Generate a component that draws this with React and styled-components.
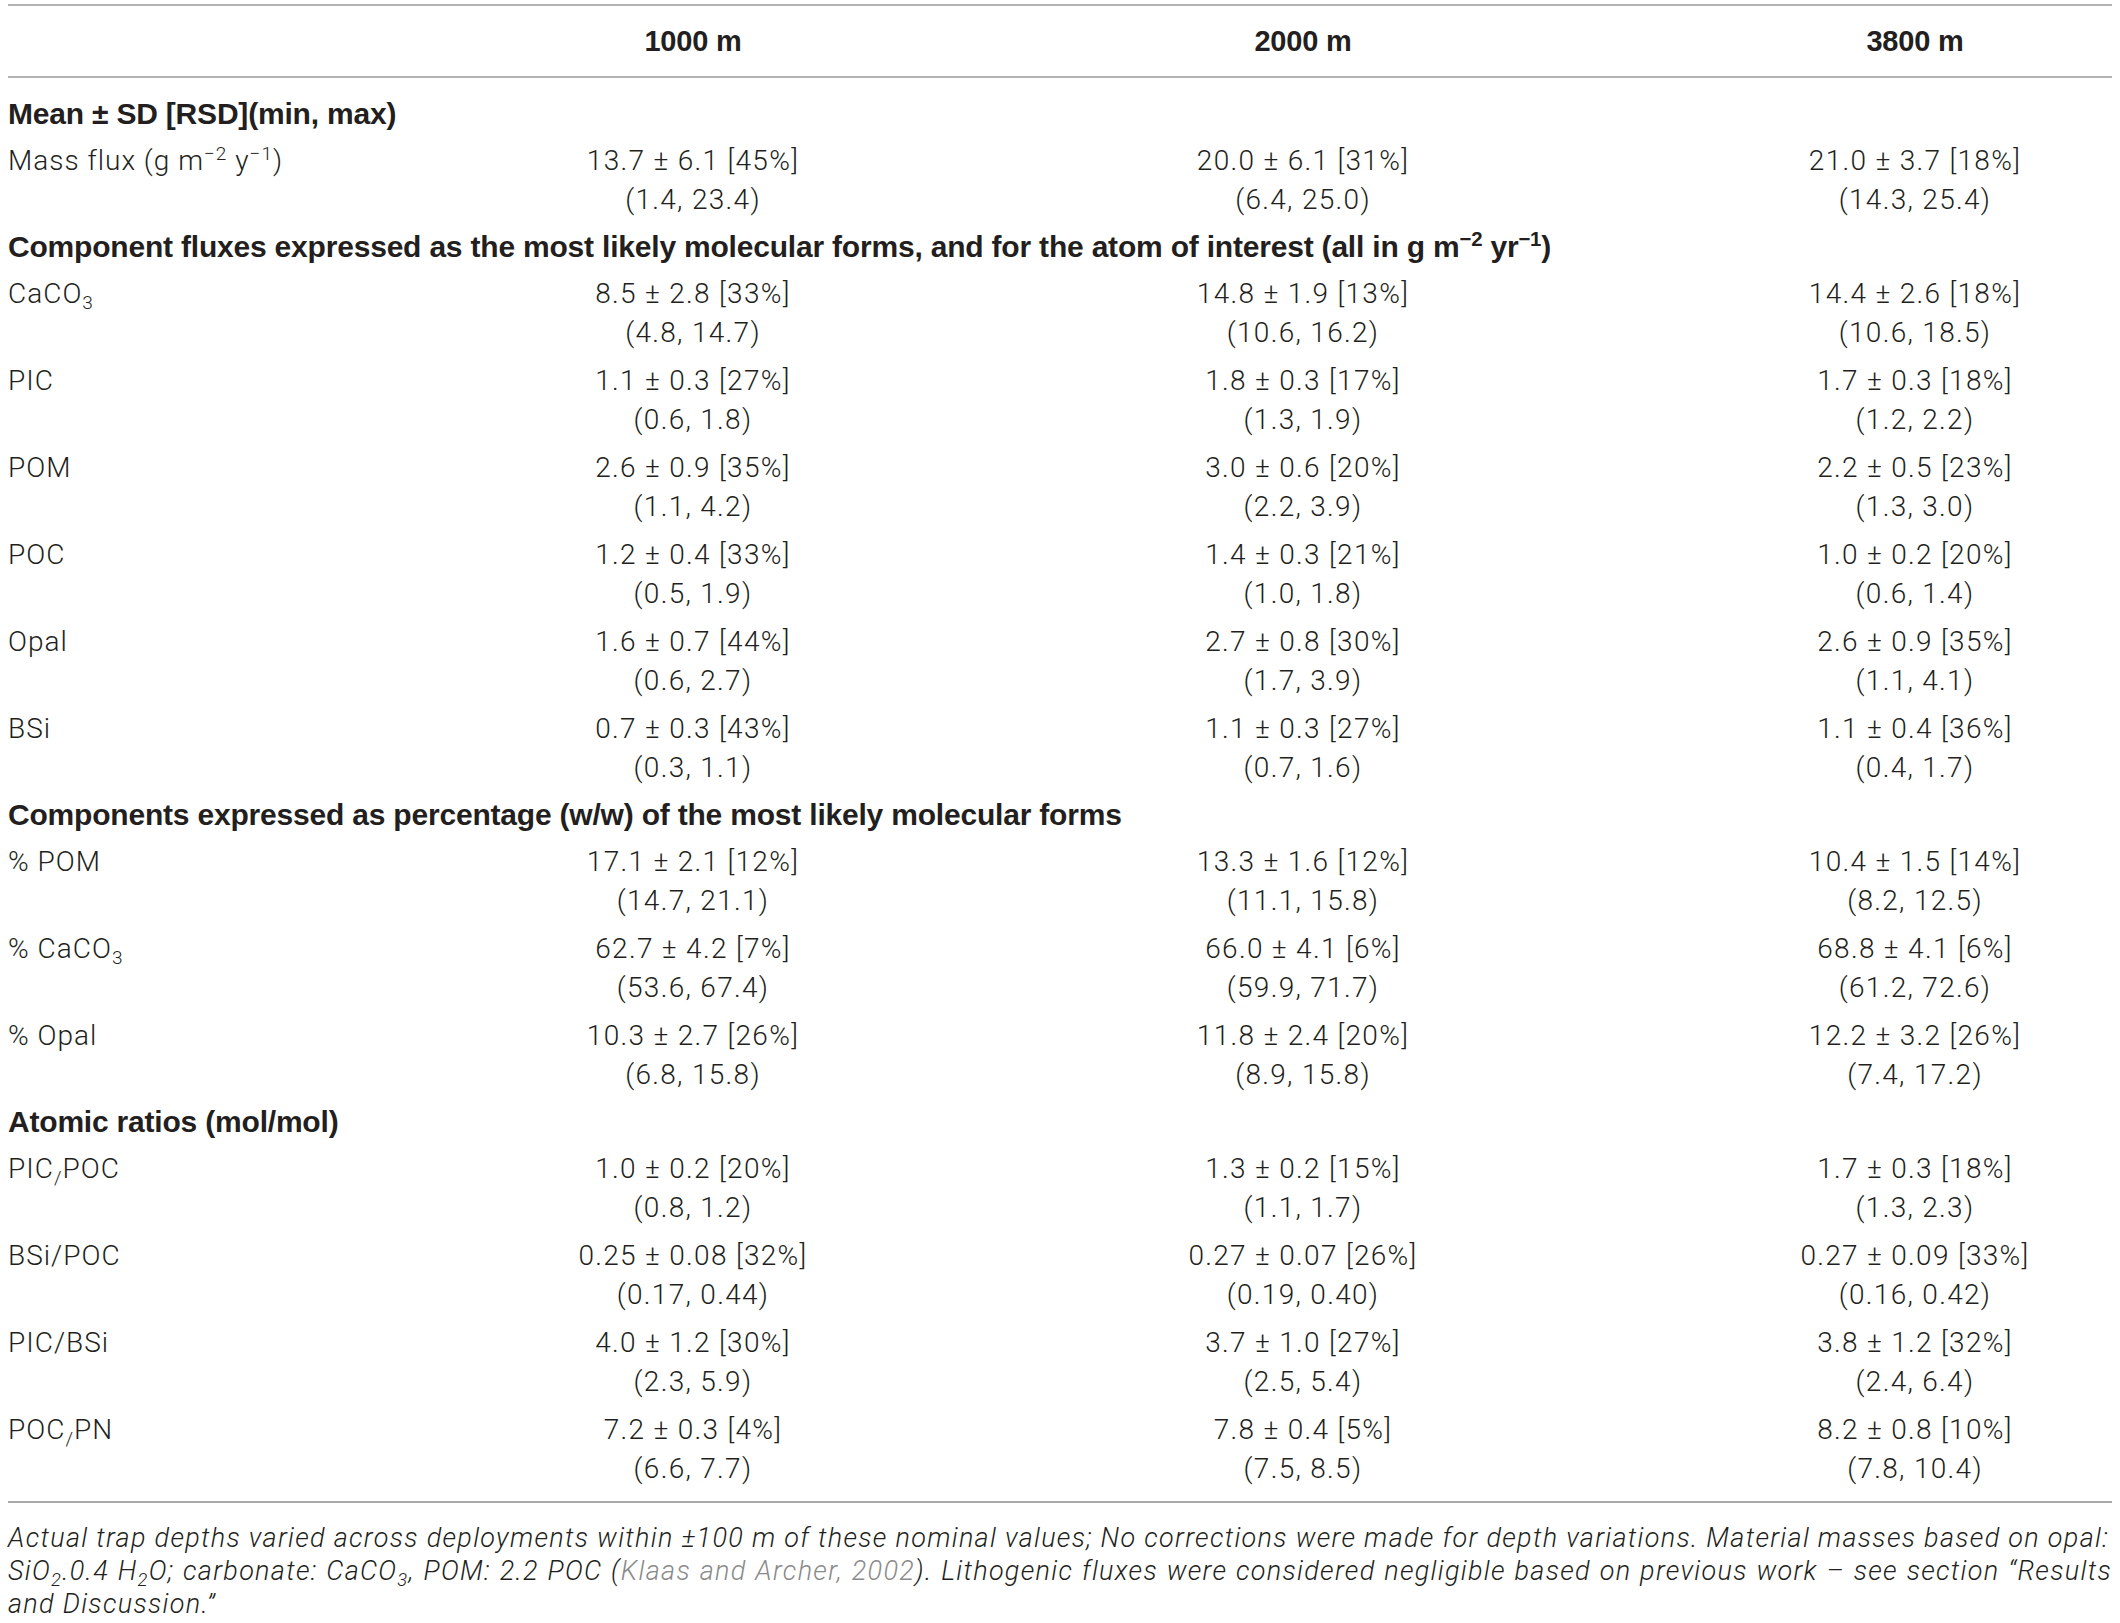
import React from "react";
import styled, { createGlobalStyle } from "styled-components";

const GlobalStyle = createGlobalStyle`
  html, body {
    margin: 0;
    padding: 0;
    background: #ffffff;
  }
  body {
    font-family: Roboto, "Liberation Sans", Arial, sans-serif;
    color: #231f20;
  }
`;

// depth columns are centred at ~693 / 1303 / 1915
const COLS = "490px 390px 830px 394px";

const sections = [
  {
    title: "Mean ± SD [RSD](min, max)",
    rows: [
      {
        label: (
          <>
            Mass flux (g m<sup>−2</sup> y<sup>−1</sup>)
          </>
        ),
        vals: [
          ["13.7 ± 6.1 [45%]", "(1.4, 23.4)"],
          ["20.0 ± 6.1 [31%]", "(6.4, 25.0)"],
          ["21.0 ± 3.7 [18%]", "(14.3, 25.4)"],
        ],
      },
    ],
  },
  {
    title: (
      <>
        Component fluxes expressed as the most likely molecular forms, and for
        the atom of interest (all in g m<sup>−2</sup> yr<sup>−1</sup>)
      </>
    ),
    rows: [
      {
        label: (
          <>
            CaCO<sub>3</sub>
          </>
        ),
        vals: [
          ["8.5 ± 2.8 [33%]", "(4.8, 14.7)"],
          ["14.8 ± 1.9 [13%]", "(10.6, 16.2)"],
          ["14.4 ± 2.6 [18%]", "(10.6, 18.5)"],
        ],
      },
      {
        label: "PIC",
        vals: [
          ["1.1 ± 0.3 [27%]", "(0.6, 1.8)"],
          ["1.8 ± 0.3 [17%]", "(1.3, 1.9)"],
          ["1.7 ± 0.3 [18%]", "(1.2, 2.2)"],
        ],
      },
      {
        label: "POM",
        vals: [
          ["2.6 ± 0.9 [35%]", "(1.1, 4.2)"],
          ["3.0 ± 0.6 [20%]", "(2.2, 3.9)"],
          ["2.2 ± 0.5 [23%]", "(1.3, 3.0)"],
        ],
      },
      {
        label: "POC",
        vals: [
          ["1.2 ± 0.4 [33%]", "(0.5, 1.9)"],
          ["1.4 ± 0.3 [21%]", "(1.0, 1.8)"],
          ["1.0 ± 0.2 [20%]", "(0.6, 1.4)"],
        ],
      },
      {
        label: "Opal",
        vals: [
          ["1.6 ± 0.7 [44%]", "(0.6, 2.7)"],
          ["2.7 ± 0.8 [30%]", "(1.7, 3.9)"],
          ["2.6 ± 0.9 [35%]", "(1.1, 4.1)"],
        ],
      },
      {
        label: "BSi",
        vals: [
          ["0.7 ± 0.3 [43%]", "(0.3, 1.1)"],
          ["1.1 ± 0.3 [27%]", "(0.7, 1.6)"],
          ["1.1 ± 0.4 [36%]", "(0.4, 1.7)"],
        ],
      },
    ],
  },
  {
    title: "Components expressed as percentage (w/w) of the most likely molecular forms",
    rows: [
      {
        label: "% POM",
        vals: [
          ["17.1 ± 2.1 [12%]", "(14.7, 21.1)"],
          ["13.3 ± 1.6 [12%]", "(11.1, 15.8)"],
          ["10.4 ± 1.5 [14%]", "(8.2, 12.5)"],
        ],
      },
      {
        label: (
          <>
            % CaCO<sub>3</sub>
          </>
        ),
        vals: [
          ["62.7 ± 4.2 [7%]", "(53.6, 67.4)"],
          ["66.0 ± 4.1 [6%]", "(59.9, 71.7)"],
          ["68.8 ± 4.1 [6%]", "(61.2, 72.6)"],
        ],
      },
      {
        label: "% Opal",
        vals: [
          ["10.3 ± 2.7 [26%]", "(6.8, 15.8)"],
          ["11.8 ± 2.4 [20%]", "(8.9, 15.8)"],
          ["12.2 ± 3.2 [26%]", "(7.4, 17.2)"],
        ],
      },
    ],
  },
  {
    title: "Atomic ratios (mol/mol)",
    rows: [
      {
        label: (
          <>
            PIC<sub>/</sub>POC
          </>
        ),
        vals: [
          ["1.0 ± 0.2 [20%]", "(0.8, 1.2)"],
          ["1.3 ± 0.2 [15%]", "(1.1, 1.7)"],
          ["1.7 ± 0.3 [18%]", "(1.3, 2.3)"],
        ],
      },
      {
        label: "BSi/POC",
        vals: [
          ["0.25 ± 0.08 [32%]", "(0.17, 0.44)"],
          ["0.27 ± 0.07 [26%]", "(0.19, 0.40)"],
          ["0.27 ± 0.09 [33%]", "(0.16, 0.42)"],
        ],
      },
      {
        label: "PIC/BSi",
        vals: [
          ["4.0 ± 1.2 [30%]", "(2.3, 5.9)"],
          ["3.7 ± 1.0 [27%]", "(2.5, 5.4)"],
          ["3.8 ± 1.2 [32%]", "(2.4, 6.4)"],
        ],
      },
      {
        label: (
          <>
            POC<sub>/</sub>PN
          </>
        ),
        vals: [
          ["7.2 ± 0.3 [4%]", "(6.6, 7.7)"],
          ["7.8 ± 0.4 [5%]", "(7.5, 8.5)"],
          ["8.2 ± 0.8 [10%]", "(7.8, 10.4)"],
        ],
      },
    ],
  },
];

const App = () => {
  return (
    <Page>
      <GlobalStyle />
      <Table>
        <HeadRow>
          <span />
          <HeadCell>1000 m</HeadCell>
          <HeadCell>2000 m</HeadCell>
          <HeadCell>3800 m</HeadCell>
        </HeadRow>
        <Body>
          {sections.map((s, i) => (
            <React.Fragment key={`sec${i}`}>
              <SectionTitle>{s.title}</SectionTitle>
              {s.rows.map((r, j) => (
                <DataRow key={`row${i}-${j}`}>
                  <Label>{r.label}</Label>
                  {r.vals.map((v, k) => (
                    <Value key={`v${k}`}>
                      <span>{v[0]}</span>
                      <span>{v[1]}</span>
                    </Value>
                  ))}
                </DataRow>
              ))}
            </React.Fragment>
          ))}
        </Body>
      </Table>
      <Footnote>
        <FootLine>
          Actual trap depths varied across deployments within ±100 m of these
          nominal values; No corrections were made for depth variations.
          Material masses based on opal:
        </FootLine>
        <FootLine $spread={0.9}>
          SiO<sub>2</sub>.0.4 H<sub>2</sub>O; carbonate: CaCO<sub>3</sub>, POM:
          2.2 POC (<Cite>Klaas and Archer, 2002</Cite>). Lithogenic fluxes were
          considered negligible based on previous work – see section “Results
        </FootLine>
        <FootLine>and Discussion.”</FootLine>
      </Footnote>
    </Page>
  );
};

export default App;

const Page = styled.div`
  width: 2120px;
  padding: 4px 8px 0;
  box-sizing: border-box;
  sup,
  sub {
    font-size: 0.68em;
    line-height: 0;
  }
  sup {
    vertical-align: 0.55em;
  }
  sub {
    vertical-align: -0.3em;
  }
`;
const Table = styled.div`
  border-top: 2px solid #b4b4b4;
  border-bottom: 2px solid #a8a8a8;
`;
const HeadRow = styled.div`
  display: grid;
  grid-template-columns: ${COLS};
  height: 70px;
  align-items: center;
  border-bottom: 2px solid #b4b4b4;
`;
const HeadCell = styled.div`
  text-align: center;
  font-family: "Liberation Sans", Arial, sans-serif;
  font-weight: 700;
  font-size: 29px;
  letter-spacing: -0.2px;
  color: #231f20;
`;
const Body = styled.div`
  padding: 13px 0 8px;
`;
const SectionTitle = styled.div`
  padding: 3px 0 4px;
  line-height: 39px;
  font-family: "Liberation Sans", Arial, sans-serif;
  font-weight: 700;
  font-size: 30px;
  letter-spacing: -0.2px;
  color: #231f20;
  white-space: nowrap;
`;
const DataRow = styled.div`
  display: grid;
  grid-template-columns: ${COLS};
  padding: 4px 0 5px;
  line-height: 39px;
  font-size: 28px;
  font-weight: 300;
  letter-spacing: 1.3px;
  color: #231f20;
`;
const Label = styled.div`
  white-space: nowrap;
  letter-spacing: 1px;
`;
const Value = styled.div`
  display: flex;
  flex-direction: column;
  align-items: center;
  white-space: nowrap;
`;
const Footnote = styled.div`
  padding: 19px 0 0;
  font-size: 27px;
  line-height: 33px;
  font-style: italic;
  font-weight: 300;
  letter-spacing: 1.3px;
  color: #231f20;
`;
const FootLine = styled.div`
  white-space: nowrap;
  word-spacing: ${(p) => p.$spread || 0}px;
`;
const Cite = styled.span`
  color: #8a8a8a;
`;
